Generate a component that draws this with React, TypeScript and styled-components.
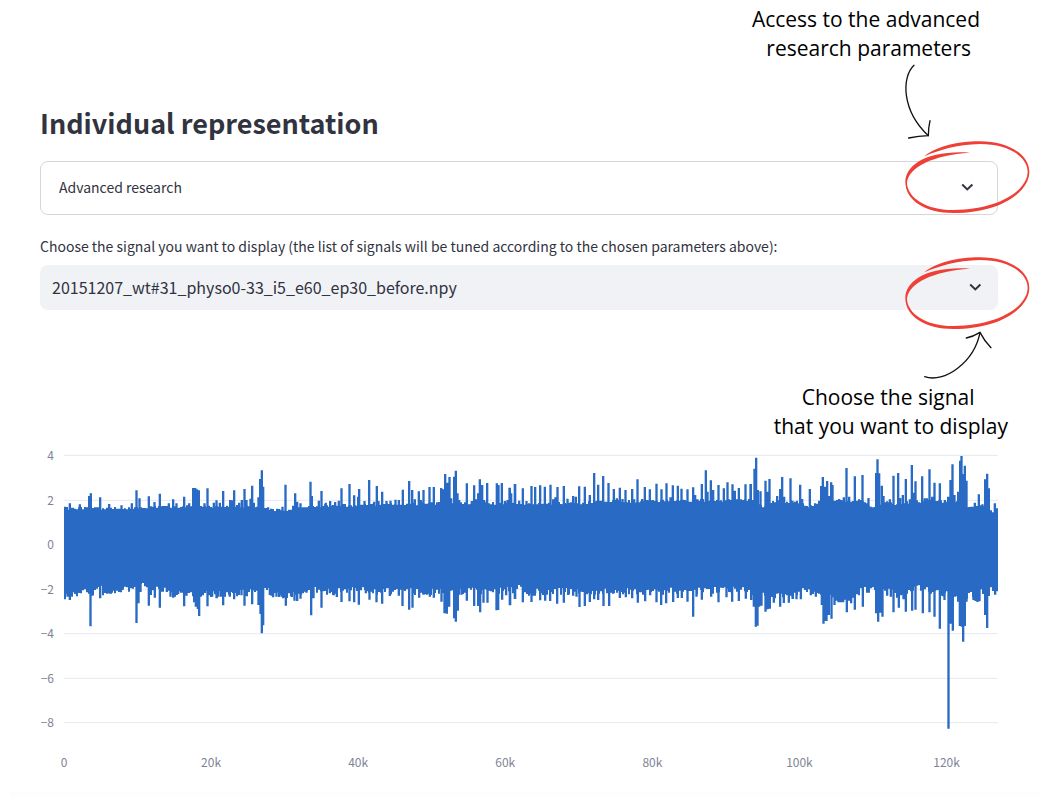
import React from "react";
import styled, { createGlobalStyle } from "styled-components";

const GlobalStyle = createGlobalStyle`
  *, *::before, *::after { box-sizing: border-box; }
  body {
    margin: 0;
    background: #ffffff;
    color: #31333f;
    font-family: "Noto Sans CJK SC", "Noto Sans", sans-serif;
  }
`;

const Page = styled.main`
  padding: 100px 52px 0 40px;
  overflow-x: hidden;
`;

const Title = styled.h2`
  margin: 0 0 15px;
  font-size: 27px;
  line-height: 46px;
  font-weight: 700;
`;

const Anchor = styled.div`
  position: relative;
`;

const Expander = styled.button`
  display: flex;
  align-items: center;
  justify-content: space-between;
  width: 100%;
  height: 54px;
  padding: 0 23px 2px 18px;
  border: 1px solid #d6d6d8;
  border-radius: 8px;
  background: #ffffff;
  color: inherit;
  font: inherit;
  font-size: 14px;
  cursor: pointer;
`;

const Label = styled.label`
  display: block;
  margin-top: 21px;
  margin-bottom: 9px;
  font-size: 14px;
  line-height: 20px;
`;

const SelectRow = styled.div`
  position: relative;
  display: flex;
  align-items: center;
`;

const Select = styled.select`
  appearance: none;
  width: 100%;
  height: 45px;
  padding: 0 40px 2px 12px;
  border: 0;
  border-radius: 8px;
  background: #f0f2f6;
  color: inherit;
  font: inherit;
  font-size: 16px;
`;

const SelectIcon = styled.span`
  position: absolute;
  right: 16px;
  display: flex;
  padding-bottom: 2px;
  pointer-events: none;
`;

const Note = styled.p<{ $top: number; $right: number }>`
  position: absolute;
  top: ${(p) => p.$top}px;
  right: ${(p) => p.$right}px;
  margin: 0;
  color: #000000;
  font-family: "Open Sans", "Noto Sans", sans-serif;
  font-size: 21px;
  line-height: 29px;
  text-align: center;
  white-space: pre;
`;

const Sketch = styled.svg<{ $top: number; $right: number }>`
  position: absolute;
  top: ${(p) => p.$top}px;
  right: ${(p) => p.$right}px;
  overflow: visible;
  pointer-events: none;
`;

const Chart = styled.figure`
  display: grid;
  grid-template-columns: 14px minmax(0, 1fr);
  column-gap: 10px;
  margin: 130px 0 0;
  color: #808495;
  font-size: 12px;
  line-height: 16px;
`;

const YAxis = styled.div`
  display: flex;
  flex-direction: column;
  justify-content: space-between;
  align-items: flex-end;
  height: 283px;
  margin-top: 7px;
`;

const Plot = styled.svg`
  display: block;
  width: 100%;
  height: 290px;
`;

const XAxis = styled.div`
  grid-column: 2;
  display: grid;
  grid-template-columns: repeat(6, 20fr) 7fr;
  margin-top: 24px;
`;

const Tick = styled.span`
  display: flex;
  justify-content: center;
  width: 0;
`;

const Divider = styled.div`
  height: 5px;
  margin: 22px -42px 0 -30px;
  background: #fdfdfd;
`;

const Chevron = () => (
  <svg width="14" height="14" viewBox="0 0 14 14" fill="none" stroke="#31333f" strokeWidth="2" aria-hidden="true">
    <path d="M2.2 4.6 L7.3 9.4 L12.4 4.6" />
  </svg>
);

const Ring = ({ top }: { top: number }) => (
  <Sketch $top={top} $right={-35} width="133" height="80" viewBox="0 0 399 240" aria-hidden="true">
    <path
      fill="#ee4036"
      d="M73 58 C105 30 170 13 240 13 C320 13 388 50 388 105 C388 165 300 228 160 228 C75 228 16 190 16 135 C16 85 80 39 210 47 C100 54 26 90 21 137 C22 180 75 219 160 219 C300 217 381 160 383 105 C382 55 320 21 240 21 C170 22 115 40 73 58 Z"
    />
  </Sketch>
);

type Peak = [number, number];
interface Segment {
  start: number;
  high: Peak[];
  low: Peak[];
}

/* Signal extrema; x is relative to the start of the segment, y to the top of the plot. */
const SEGMENTS: Segment[] = [
  {
    start: -102,
    high: [[105,200],[120,190],[150,193],[178,168],[183,160],[211,172],[238,192],[275,196],[306,190],[320,151],[329,175],[357,169],[374,186],[390,161],[417,190],[430,178],[440,190],[463,170],[478,190],[490,144],[496,144],[501,148],[507,151],[524,190],[533,145],[552,188],[560,181],[570,188],[580,153],[601,180],[606,181],[613,151],[628,188],[636,180],[644,147],[650,180],[662,176],[667,137],[672,188],[686,172],[691,117],[696,91],[700,140],[715,202]],
    low: [[105,478],[113,470],[120,480],[126,470],[182,559],[188,467],[211,475],[240,461],[246,458],[278,450],[304,445],[320,549],[326,490],[332,456],[357,497],[363,465],[375,473],[390,503],[411,456],[422,470],[430,473],[445,462],[463,499],[470,467],[493,487],[498,500],[504,507],[508,528],[516,464],[533,499],[547,470],[560,475],[566,470],[580,496],[600,470],[613,478],[635,466],[644,497],[650,468],[667,493],[686,495],[692,522],[696,580],[700,556],[720,465],[730,470],[740,470]],
  },
  {
    start: 618,
    high: [[28,207],[38,200],[47,134],[70,197],[76,160],[82,185],[92,190],[122,125],[126,168],[147,182],[155,153],[168,188],[181,183],[196,186],[207,182],[215,145],[239,132],[253,166],[265,170],[268,147],[284,183],[298,120],[313,185],[321,138],[326,183],[337,155],[350,183],[362,182],[377,179],[387,180],[399,149],[418,123],[427,150],[435,178],[447,154],[453,180],[461,150],[479,141],[492,141],[514,144],[519,148],[526,102],[532,128],[539,111],[544,175],[553,110],[558,92],[563,160],[568,180],[591,130],[606,183],[613,136],[620,178],[625,160],[630,118],[637,135],[643,180],[652,129],[681,130],[686,135],[696,129],[705,183],[713,180],[719,143],[724,160],[736,132]],
    low: [[5,467],[20,470],[35,470],[41,473],[48,497],[66,471],[74,482],[82,483],[92,476],[110,458],[124,526],[131,475],[155,503],[180,460],[192,466],[201,471],[215,486],[239,484],[253,487],[267,494],[288,460],[299,479],[320,487],[337,491],[360,468],[387,467],[398,498],[418,509],[428,503],[448,473],[461,464],[480,470],[492,473],[515,485],[524,520],[531,521],[538,500],[553,535],[558,545],[564,512],[575,464],[591,482],[613,498],[625,498],[631,517],[641,488],[653,488],[680,511],[685,510],[697,479],[709,466],[721,496],[736,477]],
  },
  {
    start: 1338,
    high: [[0,143],[4,160],[15,132],[28,182],[39,145],[50,183],[65,138],[76,141],[91,136],[105,140],[122,134],[130,178],[137,172],[143,141],[162,138],[173,176],[190,168],[198,170],[208,139],[225,140],[240,165],[253,99],[265,134],[280,108],[296,129],[312,147],[321,175],[330,143],[338,177],[347,150],[367,147],[373,178],[383,118],[397,177],[405,141],[420,148],[440,131],[455,148],[470,130],[482,172],[489,136],[504,137],[515,146],[533,148],[550,142],[556,165],[563,178],[576,132],[588,91],[593,155],[603,121],[610,150],[626,135],[642,145],[653,127],[668,133],[675,152],[687,144],[707,133],[723,132]],
    low: [[0,496],[15,477],[39,487],[65,486],[76,460],[91,481],[106,482],[121,483],[142,491],[162,488],[175,465],[190,467],[200,470],[209,501],[225,498],[240,486],[253,478],[265,480],[281,498],[298,498],[312,460],[330,474],[348,472],[367,475],[384,488],[406,484],[421,466],[440,487],[454,495],[469,490],[490,486],[504,474],[516,474],[533,485],[550,530],[560,470],[576,479],[604,470],[626,487],[650,472],[667,485],[687,483],[708,476]],
  },
  {
    start: 2058,
    high: [[2,132],[14,86],[19,53],[24,150],[32,154],[47,122],[53,155],[59,117],[82,168],[91,147],[97,111],[103,170],[122,115],[128,182],[151,134],[157,177],[180,147],[208,182],[214,138],[219,111],[225,140],[232,123],[238,168],[244,127],[248,135],[268,177],[282,172],[290,84],[298,170],[315,109],[338,105],[356,174],[379,99],[383,58],[388,100],[396,137],[401,168],[420,178],[431,107],[445,99],[451,174],[459,165],[468,117],[480,178],[486,75],[492,158],[497,124],[517,109],[525,175],[531,175],[539,88],[547,170],[554,128],[570,130],[585,180],[595,170],[602,120],[608,73],[614,165],[625,155],[631,62],[635,48],[640,102],[645,77],[650,122],[675,188],[687,163],[698,193],[706,118],[712,101],[717,145],[735,190],[741,205]],
    low: [[4,480],[12,500],[18,560],[23,557],[28,500],[35,497],[47,515],[53,508],[60,506],[72,488],[91,500],[102,489],[117,488],[128,476],[140,478],[153,478],[183,466],[198,470],[216,495],[221,551],[226,543],[230,543],[237,525],[245,536],[254,495],[260,482],[266,487],[273,487],[280,487],[291,517],[297,482],[304,490],[315,509],[327,458],[339,500],[357,458],[379,520],[385,545],[391,518],[398,530],[412,467],[423,470],[431,517],[447,503],[461,478],[468,515],[487,512],[497,509],[519,520],[539,517],[554,530],[570,566],[584,480],[596,866],[603,551],[609,572],[625,485],[630,558],[636,560],[640,605],[645,558],[650,485],[671,480],[677,483],[683,486],[689,484],[706,525],[712,564],[717,468],[736,464]],
  },
];

const UPPER: Peak[] = [[0,204],[200,206],[260,200],[580,198],[618,210],[670,210],[720,201],[790,196],[1000,194],[1100,190],[1330,190],[1500,190],[1650,184],[1800,183],[2060,179],[2098,202],[2120,185],[2200,185],[2230,198],[2300,184],[2390,180],[2420,202],[2460,187],[2500,192],[2580,182],[2640,185],[2660,180],[2712,200],[2762,193],[2780,214],[2802,214]];
const LOWER: Peak[] = [[0,452],[30,460],[84,456],[94,436],[104,440],[112,455],[220,446],[232,428],[242,446],[292,450],[300,438],[312,460],[480,464],[580,455],[600,445],[610,438],[620,465],[660,466],[690,458],[740,448],[800,455],[900,452],[1080,455],[1340,452],[1370,440],[1390,456],[1500,454],[1700,455],[1900,452],[2050,450],[2100,468],[2190,468],[2220,446],[2290,468],[2350,474],[2380,456],[2430,440],[2500,464],[2560,446],[2640,460],[2690,480],[2730,460],[2780,448],[2802,448]];

const levelAt = (curve: Peak[], x: number) => {
  const i = Math.max(1, curve.findIndex(([px]) => px >= x));
  const [x0, y0] = curve[i - 1];
  const [x1, y1] = curve[i];
  return y0 + ((y1 - y0) * (x - x0)) / (x1 - x0);
};

const jitter = (n: number) => {
  const v = Math.sin(n * 12.9898) * 43758.5453;
  return v - Math.floor(v) - 0.5;
};

const WIDTH = 2802;
const STEP = 6;
const ZERO = 314;

const signalPath = () => {
  let d = "";
  for (let x = 0; x < WIDTH; x += STEP) {
    const top = Math.round(levelAt(UPPER, x) + jitter(x + 1) * 9);
    const bottom = Math.round(levelAt(LOWER, x) + jitter(x + 5) * 22);
    d += `M${x} ${top}h${STEP}V${bottom}h${-STEP}z`;
  }
  for (const { start, high, low } of SEGMENTS) {
    for (const [x, y] of high) d += `M${start + x - 4} ${y}h7V${ZERO}h-7z`;
    for (const [x, y] of low) d += `M${start + x + 3} ${y}h-7V${ZERO}h7z`;
  }
  return d;
};

const Y_TICKS = ["4", "2", "0", "−2", "−4", "−6", "−8"];
const X_TICKS = ["0", "20k", "40k", "60k", "80k", "100k", "120k"];
const GRID = [46, 181, 314, 448, 581, 715, 848];

export default function App() {
  return (
    <>
      <GlobalStyle />
      <Page>
        <Title>Individual representation</Title>
        <Anchor>
          <Expander type="button" aria-expanded="false">
            Advanced research
            <Chevron />
          </Expander>
          <Note $top={-156} $right={18}>{"Access to the advanced\n research parameters"}</Note>
          <Sketch $top={-96} $right={66} width="26" height="74" viewBox="0 0 78 222" fill="none" stroke="#111111" strokeWidth="4" strokeLinecap="round" aria-hidden="true">
            <path d="M24 1 C-14 37 -13 137 67 212" />
            <path d="M8 219 Q38 213 67 212 Q67 189 72 167" />
          </Sketch>
          <Ring top={-24} />
        </Anchor>
        <Label htmlFor="signal">
          Choose the signal you want to display (the list of signals will be tuned according to the chosen parameters above):
        </Label>
        <Anchor>
          <SelectRow>
            <Select id="signal" defaultValue="signal-31">
              <option value="signal-31">20151207_wt#31_physo0-33_i5_e60_ep30_before.npy</option>
            </Select>
            <SelectIcon>
              <Chevron />
            </SelectIcon>
          </SelectRow>
          <Ring top={-12} />
          <Sketch $top={66} $right={4} width="70" height="50" viewBox="0 0 210 150" fill="none" stroke="#111111" strokeWidth="4" strokeLinecap="round" aria-hidden="true">
            <path d="M2 137 C60 158 150 95 168 5" />
            <path d="M127 21 Q147 17 168 4 Q181 30 201 50" />
          </Sketch>
          <Note $top={118} $right={-10}>{"Choose the signal \nthat you want to display"}</Note>
        </Anchor>
        <Chart>
          <YAxis>
            {Y_TICKS.map((t) => (
              <span key={t}>{t}</span>
            ))}
          </YAxis>
          <Plot viewBox="0 0 2802 870" preserveAspectRatio="none" role="img" aria-label="Signal amplitude">
            {GRID.map((y) => (
              <path key={y} d={`M0 ${y}H2802`} stroke="#e6e8f1" strokeWidth="3" />
            ))}
            <path d={signalPath()} fill="#286ac4" />
          </Plot>
          <XAxis>
            {X_TICKS.map((t) => (
              <Tick key={t}>{t}</Tick>
            ))}
          </XAxis>
        </Chart>
        <Divider />
      </Page>
    </>
  );
}
